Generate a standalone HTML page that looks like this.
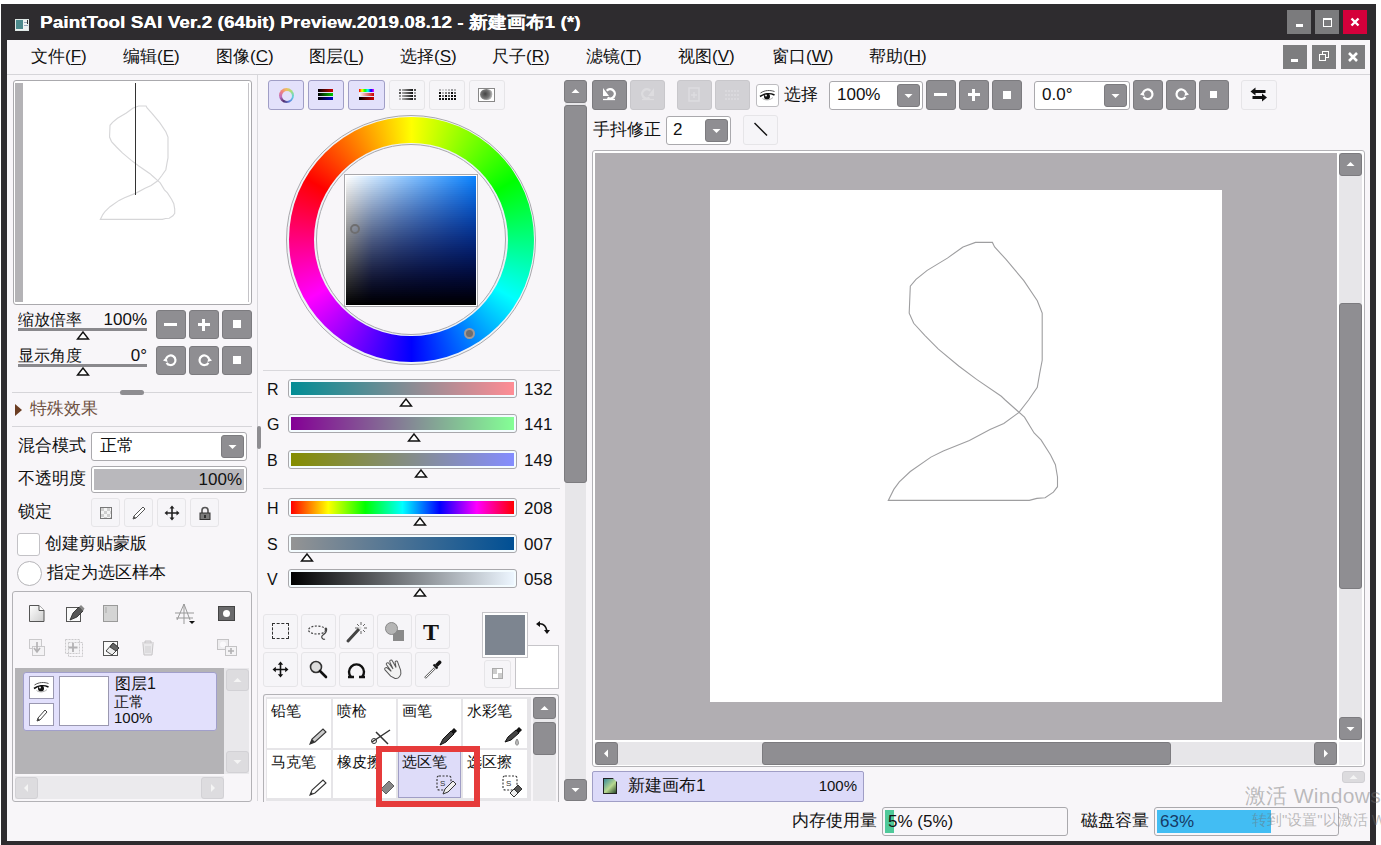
<!DOCTYPE html>
<html><head><meta charset="utf-8">
<style>
*{margin:0;padding:0;box-sizing:border-box}
html,body{width:1381px;height:845px;overflow:hidden;background:#fff;font-family:"Liberation Sans",sans-serif;color:#111}
.a{position:absolute}
.gb{position:absolute;background:#8f8e92;border:1px solid #7c7b7f;border-radius:3px}
.lb{position:absolute;background:#f6f5f8;border:1px solid #e6e5e8;border-radius:3px}
.sel{position:absolute;background:#e3e1fb;border:1px solid #a09ec6;border-radius:3px}
.box{position:absolute;background:#fff;border:1px solid #aaa9ad;border-radius:3px}
.t{position:absolute;white-space:nowrap;line-height:1}
.menu span{position:absolute;top:47px;font-size:17px;line-height:20px;white-space:nowrap}
.menu u{text-decoration:underline;text-underline-offset:2px}
svg{position:absolute;overflow:visible}
</style></head><body>
<!-- window frame -->
<div class="a" style="left:1px;top:4px;width:1375px;height:841px;background:#2e2c2f"></div>
<div class="a" style="left:7px;top:40px;width:1363px;height:801px;background:#f8f6f9"></div>

<!-- title -->
<div class="a" style="left:15px;top:19px;width:14px;height:12px;background:#eef3f2;border:1px solid #dfe8e6"></div>
<div class="a" style="left:16px;top:20px;width:7px;height:9px;background:#4c8a8c"></div>
<div class="a" style="left:24px;top:22px;width:4px;height:1px;background:#9ab"></div><div class="a" style="left:24px;top:25px;width:4px;height:1px;background:#9ab"></div><div class="a" style="left:27px;top:20px;width:1px;height:4px;background:#333"></div>
<div class="t" style="left:40px;top:14px;font-size:17px;font-weight:bold;color:#fff;letter-spacing:.15px;transform:scaleX(1.1);transform-origin:0 0;text-shadow:.3px 0 #fff">PaintTool SAI Ver.2 (64bit) Preview.2019.08.12 - 新建画布1 (*)</div>
<div class="a" style="left:1287px;top:10px;width:24px;height:24px;background:#7b7b7d"></div>
<div class="a" style="left:1296px;top:24px;width:7px;height:2.5px;background:#fff"></div>
<div class="a" style="left:1315px;top:10px;width:24px;height:24px;background:#7b7b7d"></div>
<div class="a" style="left:1323px;top:18px;width:9px;height:9px;border:1.5px solid #fff;border-top-width:2.5px"></div>
<div class="a" style="left:1343px;top:10px;width:24px;height:24px;background:#d5003b"></div>
<svg style="left:1343px;top:10px" width="24" height="24"><path d="M8.5 8.5L15.5 15.5M15.5 8.5L8.5 15.5" stroke="#fff" stroke-width="2.4"/></svg>

<!-- menu -->
<div class="menu">
<span style="left:31px">文件(<u>F</u>)</span>
<span style="left:123px">编辑(<u>E</u>)</span>
<span style="left:216px">图像(<u>C</u>)</span>
<span style="left:309px">图层(<u>L</u>)</span>
<span style="left:400px">选择(<u>S</u>)</span>
<span style="left:492px">尺子(<u>R</u>)</span>
<span style="left:586px">滤镜(<u>T</u>)</span>
<span style="left:678px">视图(<u>V</u>)</span>
<span style="left:772px">窗口(<u>W</u>)</span>
<span style="left:869px">帮助(<u>H</u>)</span>
</div>
<div class="a" style="left:1283px;top:45px;width:24px;height:24px;background:#7d7d7f"></div>
<div class="a" style="left:1291px;top:59px;width:7px;height:3px;background:#fff"></div>
<div class="a" style="left:1312px;top:45px;width:24px;height:24px;background:#7d7d7f"></div>
<div class="a" style="left:1322px;top:51px;width:7px;height:7px;border:1.5px solid #fff"></div>
<div class="a" style="left:1319px;top:54px;width:7px;height:7px;border:1.5px solid #fff;background:#7d7d7f"></div>
<div class="a" style="left:1341px;top:45px;width:24px;height:24px;background:#7d7d7f"></div>
<svg style="left:1341px;top:45px" width="24" height="24"><path d="M8 8L16 16M16 8L8 16" stroke="#fff" stroke-width="2.6"/></svg>
<div class="a" style="left:7px;top:74px;width:1363px;height:1px;background:#d6d5d9"></div>

<!-- panel separators -->
<div class="a" style="left:257px;top:75px;width:1px;height:726px;background:#d9d8dc"></div>


<!-- ===== LEFT PANEL ===== -->
<!-- navigator -->
<div class="a" style="left:13px;top:80px;width:239px;height:225px;background:#fff;border:1px solid #aaa9ad;border-radius:3px"></div>
<div class="a" style="left:15px;top:83px;width:8px;height:219px;background:#b4b3b6"></div>
<div class="a" style="left:248px;top:83px;width:1px;height:219px;background:#c4c3c7"></div>
<svg style="left:22px;top:83px" width="225" height="225" viewBox="0 0 512 512"><path d="M253.0,57.0 L265.5,52.4 L282.4,52.4 L284.6,56.9 L295.8,69.2 L313.8,90.6 L327.3,110.8 L332.2,123.1 L332.2,170.3 L329.6,183.8 L327.3,197.3 L318.6,210.0 L309.0,222.4 L293.8,233.4 L280.0,239.6 L259.4,250.6 L233.3,260.9 L220.9,267.1 L200.3,281.5 L189.3,291.9 L183.8,299.4 L178.3,310.4 L319.3,310.4 L326.9,308.4 L335.1,307.7 L343.4,302.2 L347.5,296.7 L347.5,287.0 L345.4,274.7 L340.6,265.0 L331.0,249.9 L324.1,243.0 L314.5,227.2 L307.6,221.0 L295.2,210.0 L291.3,206.3 L266.6,189.4 L248.7,176.0 L228.4,159.1 L215.0,145.6 L203.7,133.3 L199.2,123.1 L200.3,96.2 L206.0,89.4 L217.2,80.4 L237.4,68.1 L253.0,57.0" fill="none" stroke="#d6d6d8" stroke-width="2.6"/></svg>
<div class="a" style="left:135px;top:83px;width:1px;height:112px;background:#333"></div>

<!-- zoom / angle -->
<div class="t" style="left:18px;top:311px;font-size:16px;line-height:17px">缩放倍率</div>
<div class="t" style="left:100px;top:311px;width:47px;text-align:right;font-size:17px;line-height:17px">100%</div>
<div class="a" style="left:18px;top:328px;width:129px;height:3px;background:#8a898d"></div>
<svg style="left:76px;top:331px" width="14" height="9"><path d="M7 1L12.5 8H1.5Z" fill="#fff" stroke="#111" stroke-width="1.4"/></svg>
<div class="t" style="left:18px;top:347px;font-size:16px;line-height:17px">显示角度</div>
<div class="t" style="left:100px;top:347px;width:47px;text-align:right;font-size:17px;line-height:17px">0°</div>
<div class="a" style="left:18px;top:364px;width:129px;height:3px;background:#8a898d"></div>
<svg style="left:76px;top:367px" width="14" height="9"><path d="M7 1L12.5 8H1.5Z" fill="#fff" stroke="#111" stroke-width="1.4"/></svg>

<div class="gb" style="left:156px;top:310px;width:30px;height:29px"></div>
<div class="a" style="left:164px;top:323px;width:13px;height:3px;background:#fff"></div>
<div class="gb" style="left:189px;top:310px;width:30px;height:29px"></div>
<div class="a" style="left:198px;top:323px;width:12px;height:3px;background:#fff"></div>
<div class="a" style="left:202px;top:319px;width:3px;height:12px;background:#fff"></div>
<div class="gb" style="left:222px;top:310px;width:30px;height:29px"></div>
<div class="a" style="left:233px;top:320px;width:8px;height:8px;background:#fff"></div>

<div class="gb" style="left:156px;top:346px;width:30px;height:29px"></div>
<svg style="left:156px;top:346px" width="30" height="29"><path d="M10.2 12.5A4.8 4.8 0 1 1 10.6 16.8" fill="none" stroke="#fff" stroke-width="2.2"/><path d="M7 14.5L10.5 11L11.5 16Z" fill="#fff"/></svg>
<div class="gb" style="left:189px;top:346px;width:30px;height:29px"></div>
<svg style="left:189px;top:346px" width="30" height="29"><path d="M19.8 12.5A4.8 4.8 0 1 0 19.4 16.8" fill="none" stroke="#fff" stroke-width="2.2"/><path d="M23 14.5L19.5 11L18.5 16Z" fill="#fff"/></svg>
<div class="gb" style="left:222px;top:346px;width:30px;height:29px"></div>
<div class="a" style="left:233px;top:356px;width:8px;height:8px;background:#fff"></div>

<div class="a" style="left:12px;top:392px;width:240px;height:1px;background:#d6d5d9"></div>
<div class="a" style="left:120px;top:390px;width:24px;height:5px;background:#8e8d91;border-radius:3px"></div>

<!-- effects -->
<svg style="left:15px;top:404px" width="8" height="12"><path d="M0 0L7 6L0 12Z" fill="#6b3d22"/></svg>
<div class="t" style="left:30px;top:400px;font-size:17px;line-height:17px;color:#6e5040">特殊效果</div>
<div class="a" style="left:12px;top:426px;width:240px;height:1px;background:#d6d5d9"></div>
<div class="a" style="left:257px;top:426px;width:4px;height:23px;background:#8e8d91;border-radius:2px"></div>

<div class="t" style="left:18px;top:437px;font-size:17px;line-height:17px">混合模式</div>
<div class="box" style="left:91px;top:432px;width:156px;height:29px"></div>
<div class="t" style="left:100px;top:437px;font-size:17px;line-height:17px">正常</div>
<div class="gb" style="left:221px;top:435px;width:23px;height:23px"></div>
<svg style="left:221px;top:435px" width="23" height="23"><path d="M7.5 10H15.5L11.5 14Z" fill="#fff"/></svg>

<div class="t" style="left:18px;top:470px;font-size:17px;line-height:17px">不透明度</div>
<div class="box" style="left:91px;top:466px;width:156px;height:27px"></div>
<div class="a" style="left:94px;top:469px;width:150px;height:21px;background:#b9b8bc"></div>
<div class="t" style="left:150px;top:471px;width:92px;text-align:right;font-size:17px;line-height:17px">100%</div>

<div class="t" style="left:18px;top:503px;font-size:17px;line-height:17px">锁定</div>
<div class="lb" style="left:91px;top:498px;width:29px;height:29px"></div>
<div class="lb" style="left:124px;top:498px;width:29px;height:29px"></div>
<div class="lb" style="left:157px;top:498px;width:29px;height:29px"></div>
<div class="lb" style="left:190px;top:498px;width:29px;height:29px"></div>

<div class="a" style="left:17px;top:533px;width:23px;height:23px;background:#fff;border:1px solid #c3c2c6;border-radius:3px"></div>
<div class="t" style="left:45px;top:535px;font-size:17px;line-height:17px">创建剪贴蒙版</div>
<div class="a" style="left:17px;top:561px;width:25px;height:25px;background:#fff;border:1px solid #b5b4b8;border-radius:50%"></div>
<div class="t" style="left:47px;top:564px;font-size:17px;line-height:17px">指定为选区样本</div>

<!-- layer panel -->
<div class="a" style="left:12px;top:591px;width:240px;height:211px;border:1px solid #b3b2b6;border-radius:3px"></div>
<div class="a" style="left:15px;top:668px;width:209px;height:106px;background:#b4b3b6"></div>
<div class="a" style="left:23px;top:672px;width:194px;height:59px;background:#e2e0fc;border:1px solid #a19fcb;border-radius:3px"></div>
<div class="a" style="left:29px;top:676px;width:25px;height:23px;background:#fff;border:1px solid #9a98b0"></div>
<div class="a" style="left:29px;top:703px;width:25px;height:23px;background:#fff;border:1px solid #9a98b0"></div>
<div class="a" style="left:59px;top:676px;width:50px;height:50px;background:#fff;border:1px solid #9a98b0"></div>
<div class="t" style="left:115px;top:676px;font-size:16px;line-height:16px">图层1</div>
<div class="t" style="left:114px;top:694px;font-size:15px;line-height:16px">正常</div>
<div class="t" style="left:114px;top:710px;font-size:15px;line-height:15px">100%</div>
<div class="a" style="left:224px;top:668px;width:25px;height:106px;background:#e9e8eb"></div>
<div class="a" style="left:226px;top:669px;width:23px;height:22px;background:#dddcdf;border:1px solid #d2d1d5;border-radius:3px"></div>
<div class="a" style="left:226px;top:751px;width:23px;height:22px;background:#dddcdf;border:1px solid #d2d1d5;border-radius:3px"></div>
<div class="a" style="left:15px;top:776px;width:209px;height:23px;background:#ebeaed"></div>
<div class="a" style="left:15px;top:777px;width:23px;height:22px;background:#dddcdf;border:1px solid #d2d1d5;border-radius:3px"></div>
<div class="a" style="left:201px;top:777px;width:23px;height:22px;background:#dddcdf;border:1px solid #d2d1d5;border-radius:3px"></div>



<div class="a" style="left:100px;top:507px;width:12px;height:12px;border:1px solid #777;background:conic-gradient(#f4f4f4 25%,#cfcfcf 25% 50%,#f4f4f4 50% 75%,#cfcfcf 75%);background-size:6px 6px"></div>
<svg style="left:131px;top:505px" width="16" height="16"><path d="M2 14L3 11L12 2L14 4L5 13Z" fill="#fff" stroke="#555" stroke-width="1"/><path d="M2 14L3 11L5 13Z" fill="#555"/></svg>
<svg style="left:164px;top:505px" width="16" height="16"><path d="M8 2V14M2 8H14" stroke="#222" stroke-width="1.6"/><path d="M8 0.5L5.5 3.5H10.5ZM8 15.5L5.5 12.5H10.5ZM0.5 8L3.5 5.5V10.5ZM15.5 8L12.5 5.5V10.5Z" fill="#222"/></svg>
<svg style="left:197px;top:505px" width="16" height="16"><path d="M5 8V5.5A3 3 0 0 1 11 5.5V8" fill="none" stroke="#555" stroke-width="1.6"/><rect x="3" y="8" width="10" height="6.5" fill="#7a7a7a" stroke="#333" stroke-width="1"/><rect x="7.3" y="10" width="1.4" height="3" fill="#111"/></svg>

<svg style="left:28px;top:604px" width="18" height="19"><path d="M1.5 1.5H11L16 6.5V17.5H1.5Z" fill="url(#pg)" stroke="#555" stroke-width="1"/><path d="M11 1.5V6.5H16" fill="#fff" stroke="#555" stroke-width="1"/><defs><linearGradient id="pg" x1="0" y1="0" x2="1" y2="1"><stop offset="0" stop-color="#fff"/><stop offset="1" stop-color="#ccc"/></linearGradient></defs></svg>
<svg style="left:65px;top:604px" width="20" height="19"><rect x="1.5" y="3.5" width="14" height="14" fill="#fafafa" stroke="#555"/><path d="M5 16L8 9L14 3L18 7L12 13Z" fill="#555" stroke="#222" stroke-width=".8"/><path d="M14 3L16 1L19.5 4.5L18 7Z" fill="#888"/></svg>
<svg style="left:102px;top:604px" width="18" height="19"><rect x="1.5" y="1.5" width="14" height="16" fill="#d4d4d4" stroke="#9a9a9a"/><path d="M4 3V9" stroke="#aaa"/></svg>
<svg style="left:174px;top:603px" width="24" height="22"><path d="M10 1L3 17M10 1L16 17M10 1V21M1 10H20M2 15H19" fill="none" stroke="#999" stroke-width="1"/><path d="M15 18H21L18 21Z" fill="#111"/></svg>
<div class="a" style="left:218px;top:606px;width:17px;height:15px;background:#6a6a6c;border:1px solid #444"></div>
<div class="a" style="left:223px;top:610px;width:7px;height:7px;border-radius:50%;background:#fff"></div>

<svg style="left:28px;top:638px" width="18" height="19" opacity=".35"><rect x="1.5" y="1.5" width="12" height="9" fill="#eee" stroke="#777"/><rect x="4.5" y="8.5" width="12" height="9" fill="#eee" stroke="#777"/><path d="M9 4V13M6 10L9 14L12 10" stroke="#333" stroke-width="1.6" fill="none"/></svg>
<svg style="left:64px;top:638px" width="19" height="19" opacity=".35"><rect x="1.5" y="1.5" width="14" height="14" fill="#eee" stroke="#777" stroke-dasharray="2 1"/><rect x="4.5" y="4.5" width="14" height="14" fill="none" stroke="#777" stroke-dasharray="2 1"/><path d="M9 5V14M4.5 9.5H13.5" stroke="#333" stroke-width="1.8"/></svg>
<svg style="left:102px;top:638px" width="19" height="19"><rect x="1.5" y="3.5" width="14" height="14" fill="#fafafa" stroke="#555"/><path d="M4 13L11 5L17 10L10 17Z" fill="#eee" stroke="#333" stroke-width=".9"/><path d="M8 9L11 5L17 10L14 13Z" fill="#666" stroke="#333" stroke-width=".9"/></svg>
<svg style="left:139px;top:638px" width="18" height="19" opacity=".3"><path d="M3 5H15M6 5V3H12V5M4 6L5 17H13L14 6" fill="#ccc" stroke="#555"/><path d="M7 8V15M9 8V15M11 8V15" stroke="#777"/></svg>
<svg style="left:216px;top:638px" width="22" height="19" opacity=".35"><rect x="1.5" y="1.5" width="11" height="10" fill="#ddd" stroke="#666"/><circle cx="7" cy="6.5" r="3" fill="#fff"/><rect x="9.5" y="8.5" width="11" height="9" fill="#eee" stroke="#666"/><path d="M15 10V16M12 13H18" stroke="#333" stroke-width="1.6"/></svg>

<svg style="left:29px;top:676px" width="25" height="23"><path d="M5.5 9C10 6 15 6 19.5 7.5" fill="none" stroke="#555" stroke-width="1"/><path d="M5 12.5C9 9.5 15 9 19.5 11" fill="none" stroke="#111" stroke-width="1.6"/><circle cx="12" cy="12.5" r="3" fill="#111"/><circle cx="11" cy="11.5" r=".9" fill="#fff"/><path d="M7.5 14.5C10 16.5 15 16.5 18 13.5" fill="none" stroke="#999" stroke-width=".8"/></svg>
<svg style="left:29px;top:703px" width="25" height="23"><path d="M8 18L9 15L16 7L18 9L11 17Z" fill="#fff" stroke="#444" stroke-width="1"/><path d="M8 18L9 15L11 17Z" fill="#444"/></svg>
<svg style="left:226px;top:669px" width="23" height="22"><path d="M7.5 13H15.5L11.5 9Z" fill="#f4f4f4"/></svg>
<svg style="left:226px;top:751px" width="23" height="22"><path d="M7.5 9H15.5L11.5 13Z" fill="#f4f4f4"/></svg>
<svg style="left:15px;top:777px" width="23" height="22"><path d="M13 7V15L9 11Z" fill="#f4f4f4"/></svg>
<svg style="left:201px;top:777px" width="23" height="22"><path d="M10 7V15L14 11Z" fill="#f4f4f4"/></svg>
<div class="a" style="left:533px;top:779px;width:23px;height:22px;background:#e9e8eb"></div>

<!-- ===== COLOR PANEL ===== -->
<div class="sel" style="left:268px;top:80px;width:36px;height:30px"></div>
<div class="a" style="left:279px;top:88px;width:15px;height:15px;border-radius:50%;background:conic-gradient(#f0c060,#a0e080,#60d0e0,#6080e0,#503070,#c070c0,#f08080,#f0c060)"></div><div class="a" style="left:281.5px;top:90.5px;width:10px;height:10px;border-radius:50%;background:#e3e1fb"></div>
<div class="sel" style="left:308px;top:80px;width:36px;height:30px"></div>
<div class="a" style="left:318px;top:89px;width:15px;height:3px;background:linear-gradient(90deg,#000,#c00)"></div>
<div class="a" style="left:318px;top:93px;width:15px;height:3px;background:linear-gradient(90deg,#000,#0c0)"></div>
<div class="a" style="left:318px;top:97px;width:15px;height:3px;background:linear-gradient(90deg,#000,#00c)"></div>
<div class="sel" style="left:348px;top:80px;width:37px;height:30px"></div>
<div class="a" style="left:359px;top:89px;width:15px;height:3px;background:linear-gradient(90deg,#f00,#ff0,#0f0,#0ff,#00f,#f0f)"></div>
<div class="a" style="left:359px;top:93px;width:15px;height:3px;background:linear-gradient(90deg,#fff,#c00)"></div>
<div class="a" style="left:359px;top:97px;width:15px;height:3px;background:linear-gradient(90deg,#000,#c00)"></div>
<div class="lb" style="left:389px;top:80px;width:36px;height:30px"></div>
<svg style="left:389px;top:80px" width="36" height="30"><defs><linearGradient id="lg4"><stop offset="0" stop-color="#aaa"/><stop offset="1" stop-color="#111"/></linearGradient></defs><g fill="#555"><rect x="10" y="9" width="2" height="2" opacity=".7"/><rect x="10" y="12" width="2" height="2"/><rect x="10" y="15" width="2" height="2" opacity=".6"/><rect x="10" y="18" width="2" height="2" opacity=".4"/><rect x="25" y="9" width="2" height="2"/><rect x="25" y="12" width="2" height="2" opacity=".5"/><rect x="25" y="15" width="2" height="2"/><rect x="25" y="18" width="2" height="2"/></g><g fill="url(#lg4)"><rect x="13" y="9" width="11" height="2"/><rect x="13" y="12" width="11" height="2"/><rect x="13" y="15" width="11" height="2"/><rect x="13" y="18" width="11" height="2"/></g></svg>
<div class="lb" style="left:429px;top:80px;width:36px;height:30px"></div>
<svg style="left:429px;top:80px" width="36" height="30"><g fill="#111"><rect x="10" y="9" width="2" height="2" opacity="0.3"/><rect x="13" y="9" width="2" height="2" opacity="0.15"/><rect x="16" y="9" width="2" height="2" opacity="0.2"/><rect x="19" y="9" width="2" height="2" opacity="0.25"/><rect x="22" y="9" width="2" height="2" opacity="0.4"/><rect x="25" y="9" width="2" height="2" opacity="0.3"/><rect x="10" y="12" width="2" height="2" opacity="1"/><rect x="13" y="12" width="2" height="2" opacity="0.3"/><rect x="16" y="12" width="2" height="2" opacity="0.5"/><rect x="19" y="12" width="2" height="2" opacity="0.6"/><rect x="22" y="12" width="2" height="2" opacity="1"/><rect x="25" y="12" width="2" height="2" opacity="0.6"/><rect x="10" y="15" width="2" height="2" opacity="1"/><rect x="13" y="15" width="2" height="2" opacity="0.6"/><rect x="16" y="15" width="2" height="2" opacity="1"/><rect x="19" y="15" width="2" height="2" opacity="0.7"/><rect x="22" y="15" width="2" height="2" opacity="1"/><rect x="25" y="15" width="2" height="2" opacity="1"/><rect x="10" y="18" width="2" height="2" opacity="1"/><rect x="13" y="18" width="2" height="2" opacity="1"/><rect x="16" y="18" width="2" height="2" opacity="1"/><rect x="19" y="18" width="2" height="2" opacity="1"/><rect x="22" y="18" width="2" height="2" opacity="1"/><rect x="25" y="18" width="2" height="2" opacity="1"/></g></svg>
<div class="lb" style="left:469px;top:80px;width:36px;height:30px"></div>
<div class="a" style="left:478px;top:88px;width:17px;height:14px;background:#fff;border:1px solid #888"></div>
<div class="a" style="left:480px;top:89px;width:13px;height:11px;border-radius:50%;background:radial-gradient(circle at 40% 45%,#444,#777 45%,#bbb 70%,transparent 76%)"></div>

<!-- wheel -->
<div class="a" style="left:286.2px;top:114.6px;width:250.0px;height:250.0px;border-radius:50%;background:#f0f4f8;border:1px solid #a9a8ac"></div>
<div class="a" style="left:288.7px;top:117.1px;width:245.0px;height:245.0px;border-radius:50%;background:conic-gradient(from 0deg,#ff0,#0f0,#0ff,#00f,#f0f,#f00,#ff0)"></div>
<div class="a" style="left:314.4px;top:142.8px;width:193.6px;height:193.6px;border-radius:50%;background:#eef2f8"></div>
<div class="a" style="left:315.9px;top:144.3px;width:190.6px;height:190.6px;border-radius:50%;background:#f8f6f9;border:1px solid #a9a8ac"></div>
<div class="a" style="left:344px;top:174px;width:134px;height:133px;background:#fff;border:1px solid #a9a8ac"></div>
<svg style="left:346px;top:176px;overflow:hidden" width="130" height="129" shape-rendering="crispEdges"><defs><linearGradient id="q0"><stop offset="0.0" stop-color="#fdfdfd"/><stop offset="0.2" stop-color="#cce4fd"/><stop offset="0.4" stop-color="#9bccfd"/><stop offset="0.6" stop-color="#6bb3fd"/><stop offset="0.8" stop-color="#3a9bfd"/><stop offset="1.0" stop-color="#0a82fd"/></linearGradient><linearGradient id="q1"><stop offset="0.0" stop-color="#f9f9f9"/><stop offset="0.2" stop-color="#c7e0f9"/><stop offset="0.4" stop-color="#97c7f9"/><stop offset="0.6" stop-color="#68aff9"/><stop offset="0.8" stop-color="#3897f9"/><stop offset="1.0" stop-color="#0a7ff9"/></linearGradient><linearGradient id="q2"><stop offset="0.0" stop-color="#f5f5f5"/><stop offset="0.2" stop-color="#c3dbf5"/><stop offset="0.4" stop-color="#93c2f5"/><stop offset="0.6" stop-color="#65aaf5"/><stop offset="0.8" stop-color="#3793f5"/><stop offset="1.0" stop-color="#097bf5"/></linearGradient><linearGradient id="q3"><stop offset="0.0" stop-color="#f1f1f1"/><stop offset="0.2" stop-color="#bfd7f1"/><stop offset="0.4" stop-color="#90bef1"/><stop offset="0.6" stop-color="#62a6f1"/><stop offset="0.8" stop-color="#358ff1"/><stop offset="1.0" stop-color="#0978f1"/></linearGradient><linearGradient id="q4"><stop offset="0.0" stop-color="#ededed"/><stop offset="0.2" stop-color="#bad2ed"/><stop offset="0.4" stop-color="#8cb9ed"/><stop offset="0.6" stop-color="#5fa2ed"/><stop offset="0.8" stop-color="#338bed"/><stop offset="1.0" stop-color="#0975ed"/></linearGradient><linearGradient id="q5"><stop offset="0.0" stop-color="#e9e9e9"/><stop offset="0.2" stop-color="#b6cee9"/><stop offset="0.4" stop-color="#88b5e9"/><stop offset="0.6" stop-color="#5c9de9"/><stop offset="0.8" stop-color="#3287e9"/><stop offset="1.0" stop-color="#0971e9"/></linearGradient><linearGradient id="q6"><stop offset="0.0" stop-color="#e5e5e5"/><stop offset="0.2" stop-color="#b2c9e5"/><stop offset="0.4" stop-color="#84b0e5"/><stop offset="0.6" stop-color="#5999e5"/><stop offset="0.8" stop-color="#3083e5"/><stop offset="1.0" stop-color="#096ee5"/></linearGradient><linearGradient id="q7"><stop offset="0.0" stop-color="#e1e1e1"/><stop offset="0.2" stop-color="#aec5e1"/><stop offset="0.4" stop-color="#81ace1"/><stop offset="0.6" stop-color="#5795e1"/><stop offset="0.8" stop-color="#2f7fe1"/><stop offset="1.0" stop-color="#086be1"/></linearGradient><linearGradient id="q8"><stop offset="0.0" stop-color="#dddddd"/><stop offset="0.2" stop-color="#a9c0dd"/><stop offset="0.4" stop-color="#7da8dd"/><stop offset="0.6" stop-color="#5491dd"/><stop offset="0.8" stop-color="#2d7cdd"/><stop offset="1.0" stop-color="#0868dd"/></linearGradient><linearGradient id="q9"><stop offset="0.0" stop-color="#d9d9d9"/><stop offset="0.2" stop-color="#a5bcd9"/><stop offset="0.4" stop-color="#79a3d9"/><stop offset="0.6" stop-color="#518dd9"/><stop offset="0.8" stop-color="#2b78d9"/><stop offset="1.0" stop-color="#0865d9"/></linearGradient><linearGradient id="q10"><stop offset="0.0" stop-color="#d5d5d5"/><stop offset="0.2" stop-color="#a1b7d5"/><stop offset="0.4" stop-color="#769fd5"/><stop offset="0.6" stop-color="#4e89d5"/><stop offset="0.8" stop-color="#2a74d5"/><stop offset="1.0" stop-color="#0862d5"/></linearGradient><linearGradient id="q11"><stop offset="0.0" stop-color="#d2d2d2"/><stop offset="0.2" stop-color="#9db3d2"/><stop offset="0.4" stop-color="#729ad2"/><stop offset="0.6" stop-color="#4c85d2"/><stop offset="0.8" stop-color="#2971d2"/><stop offset="1.0" stop-color="#075fd2"/></linearGradient><linearGradient id="q12"><stop offset="0.0" stop-color="#cecece"/><stop offset="0.2" stop-color="#98aece"/><stop offset="0.4" stop-color="#6f96ce"/><stop offset="0.6" stop-color="#4981ce"/><stop offset="0.8" stop-color="#276dce"/><stop offset="1.0" stop-color="#075cce"/></linearGradient><linearGradient id="q13"><stop offset="0.0" stop-color="#cacaca"/><stop offset="0.2" stop-color="#94aaca"/><stop offset="0.4" stop-color="#6b92ca"/><stop offset="0.6" stop-color="#477dca"/><stop offset="0.8" stop-color="#266aca"/><stop offset="1.0" stop-color="#0759ca"/></linearGradient><linearGradient id="q14"><stop offset="0.0" stop-color="#c6c6c6"/><stop offset="0.2" stop-color="#90a5c6"/><stop offset="0.4" stop-color="#688dc6"/><stop offset="0.6" stop-color="#4479c6"/><stop offset="0.8" stop-color="#2466c6"/><stop offset="1.0" stop-color="#0756c6"/></linearGradient><linearGradient id="q15"><stop offset="0.0" stop-color="#c2c2c2"/><stop offset="0.2" stop-color="#8ca1c2"/><stop offset="0.4" stop-color="#6489c2"/><stop offset="0.6" stop-color="#4275c2"/><stop offset="0.8" stop-color="#2363c2"/><stop offset="1.0" stop-color="#0753c2"/></linearGradient><linearGradient id="q16"><stop offset="0.0" stop-color="#bebebe"/><stop offset="0.2" stop-color="#889cbe"/><stop offset="0.4" stop-color="#6185be"/><stop offset="0.6" stop-color="#3f71be"/><stop offset="0.8" stop-color="#2260be"/><stop offset="1.0" stop-color="#0650be"/></linearGradient><linearGradient id="q17"><stop offset="0.0" stop-color="#bababa"/><stop offset="0.2" stop-color="#8498ba"/><stop offset="0.4" stop-color="#5e81ba"/><stop offset="0.6" stop-color="#3d6dba"/><stop offset="0.8" stop-color="#205cba"/><stop offset="1.0" stop-color="#064dba"/></linearGradient><linearGradient id="q18"><stop offset="0.0" stop-color="#b6b6b6"/><stop offset="0.2" stop-color="#7f94b6"/><stop offset="0.4" stop-color="#5a7db6"/><stop offset="0.6" stop-color="#3b6ab6"/><stop offset="0.8" stop-color="#1f59b6"/><stop offset="1.0" stop-color="#064ab6"/></linearGradient><linearGradient id="q19"><stop offset="0.0" stop-color="#b2b2b2"/><stop offset="0.2" stop-color="#7b8fb2"/><stop offset="0.4" stop-color="#5779b2"/><stop offset="0.6" stop-color="#3866b2"/><stop offset="0.8" stop-color="#1e56b2"/><stop offset="1.0" stop-color="#0648b2"/></linearGradient><linearGradient id="q20"><stop offset="0.0" stop-color="#aeaeae"/><stop offset="0.2" stop-color="#778bae"/><stop offset="0.4" stop-color="#5474ae"/><stop offset="0.6" stop-color="#3662ae"/><stop offset="0.8" stop-color="#1c53ae"/><stop offset="1.0" stop-color="#0645ae"/></linearGradient><linearGradient id="q21"><stop offset="0.0" stop-color="#aaaaaa"/><stop offset="0.2" stop-color="#7387aa"/><stop offset="0.4" stop-color="#5170aa"/><stop offset="0.6" stop-color="#345faa"/><stop offset="0.8" stop-color="#1b4faa"/><stop offset="1.0" stop-color="#0542aa"/></linearGradient><linearGradient id="q22"><stop offset="0.0" stop-color="#a6a6a6"/><stop offset="0.2" stop-color="#6f82a6"/><stop offset="0.4" stop-color="#4d6ca6"/><stop offset="0.6" stop-color="#325ba6"/><stop offset="0.8" stop-color="#1a4ca6"/><stop offset="1.0" stop-color="#0540a6"/></linearGradient><linearGradient id="q23"><stop offset="0.0" stop-color="#a2a2a2"/><stop offset="0.2" stop-color="#6c7ea2"/><stop offset="0.4" stop-color="#4a68a2"/><stop offset="0.6" stop-color="#3057a2"/><stop offset="0.8" stop-color="#1949a2"/><stop offset="1.0" stop-color="#053da2"/></linearGradient><linearGradient id="q24"><stop offset="0.0" stop-color="#9e9e9e"/><stop offset="0.2" stop-color="#687a9e"/><stop offset="0.4" stop-color="#47659e"/><stop offset="0.6" stop-color="#2e549e"/><stop offset="0.8" stop-color="#18469e"/><stop offset="1.0" stop-color="#053b9e"/></linearGradient><linearGradient id="q25"><stop offset="0.0" stop-color="#9a9a9a"/><stop offset="0.2" stop-color="#64759a"/><stop offset="0.4" stop-color="#44619a"/><stop offset="0.6" stop-color="#2c519a"/><stop offset="0.8" stop-color="#17439a"/><stop offset="1.0" stop-color="#05389a"/></linearGradient><linearGradient id="q26"><stop offset="0.0" stop-color="#969696"/><stop offset="0.2" stop-color="#607196"/><stop offset="0.4" stop-color="#415d96"/><stop offset="0.6" stop-color="#2a4d96"/><stop offset="0.8" stop-color="#164096"/><stop offset="1.0" stop-color="#053696"/></linearGradient><linearGradient id="q27"><stop offset="0.0" stop-color="#929292"/><stop offset="0.2" stop-color="#5c6d92"/><stop offset="0.4" stop-color="#3f5992"/><stop offset="0.6" stop-color="#284a92"/><stop offset="0.8" stop-color="#153e92"/><stop offset="1.0" stop-color="#043392"/></linearGradient><linearGradient id="q28"><stop offset="0.0" stop-color="#8e8e8e"/><stop offset="0.2" stop-color="#58698e"/><stop offset="0.4" stop-color="#3c558e"/><stop offset="0.6" stop-color="#26478e"/><stop offset="0.8" stop-color="#143b8e"/><stop offset="1.0" stop-color="#04318e"/></linearGradient><linearGradient id="q29"><stop offset="0.0" stop-color="#8a8a8a"/><stop offset="0.2" stop-color="#55658a"/><stop offset="0.4" stop-color="#39528a"/><stop offset="0.6" stop-color="#24438a"/><stop offset="0.8" stop-color="#13388a"/><stop offset="1.0" stop-color="#042f8a"/></linearGradient><linearGradient id="q30"><stop offset="0.0" stop-color="#868686"/><stop offset="0.2" stop-color="#516086"/><stop offset="0.4" stop-color="#364e86"/><stop offset="0.6" stop-color="#224086"/><stop offset="0.8" stop-color="#123586"/><stop offset="1.0" stop-color="#042c86"/></linearGradient><linearGradient id="q31"><stop offset="0.0" stop-color="#828282"/><stop offset="0.2" stop-color="#4d5c82"/><stop offset="0.4" stop-color="#344a82"/><stop offset="0.6" stop-color="#203d82"/><stop offset="0.8" stop-color="#113382"/><stop offset="1.0" stop-color="#042a82"/></linearGradient><linearGradient id="q32"><stop offset="0.0" stop-color="#7f7f7f"/><stop offset="0.2" stop-color="#4a587f"/><stop offset="0.4" stop-color="#31477f"/><stop offset="0.6" stop-color="#1e3a7f"/><stop offset="0.8" stop-color="#10307f"/><stop offset="1.0" stop-color="#03287f"/></linearGradient><linearGradient id="q33"><stop offset="0.0" stop-color="#7b7b7b"/><stop offset="0.2" stop-color="#46547b"/><stop offset="0.4" stop-color="#2e437b"/><stop offset="0.6" stop-color="#1d377b"/><stop offset="0.8" stop-color="#0f2e7b"/><stop offset="1.0" stop-color="#03267b"/></linearGradient><linearGradient id="q34"><stop offset="0.0" stop-color="#777777"/><stop offset="0.2" stop-color="#435077"/><stop offset="0.4" stop-color="#2c4077"/><stop offset="0.6" stop-color="#1b3477"/><stop offset="0.8" stop-color="#0e2b77"/><stop offset="1.0" stop-color="#032477"/></linearGradient><linearGradient id="q35"><stop offset="0.0" stop-color="#737373"/><stop offset="0.2" stop-color="#404c73"/><stop offset="0.4" stop-color="#293c73"/><stop offset="0.6" stop-color="#1a3173"/><stop offset="0.8" stop-color="#0d2973"/><stop offset="1.0" stop-color="#032273"/></linearGradient><linearGradient id="q36"><stop offset="0.0" stop-color="#6f6f6f"/><stop offset="0.2" stop-color="#3c496f"/><stop offset="0.4" stop-color="#27396f"/><stop offset="0.6" stop-color="#182f6f"/><stop offset="0.8" stop-color="#0c266f"/><stop offset="1.0" stop-color="#03206f"/></linearGradient><linearGradient id="q37"><stop offset="0.0" stop-color="#6b6b6b"/><stop offset="0.2" stop-color="#39456b"/><stop offset="0.4" stop-color="#25366b"/><stop offset="0.6" stop-color="#162c6b"/><stop offset="0.8" stop-color="#0c246b"/><stop offset="1.0" stop-color="#031e6b"/></linearGradient><linearGradient id="q38"><stop offset="0.0" stop-color="#676767"/><stop offset="0.2" stop-color="#364167"/><stop offset="0.4" stop-color="#223367"/><stop offset="0.6" stop-color="#152967"/><stop offset="0.8" stop-color="#0b2267"/><stop offset="1.0" stop-color="#031c67"/></linearGradient><linearGradient id="q39"><stop offset="0.0" stop-color="#636363"/><stop offset="0.2" stop-color="#323d63"/><stop offset="0.4" stop-color="#203063"/><stop offset="0.6" stop-color="#142763"/><stop offset="0.8" stop-color="#0a2063"/><stop offset="1.0" stop-color="#021a63"/></linearGradient><linearGradient id="q40"><stop offset="0.0" stop-color="#5f5f5f"/><stop offset="0.2" stop-color="#2f3a5f"/><stop offset="0.4" stop-color="#1e2d5f"/><stop offset="0.6" stop-color="#12245f"/><stop offset="0.8" stop-color="#091e5f"/><stop offset="1.0" stop-color="#02195f"/></linearGradient><linearGradient id="q41"><stop offset="0.0" stop-color="#5b5b5b"/><stop offset="0.2" stop-color="#2c365b"/><stop offset="0.4" stop-color="#1c2a5b"/><stop offset="0.6" stop-color="#11225b"/><stop offset="0.8" stop-color="#091c5b"/><stop offset="1.0" stop-color="#02175b"/></linearGradient><linearGradient id="q42"><stop offset="0.0" stop-color="#575757"/><stop offset="0.2" stop-color="#293357"/><stop offset="0.4" stop-color="#1a2757"/><stop offset="0.6" stop-color="#101f57"/><stop offset="0.8" stop-color="#081a57"/><stop offset="1.0" stop-color="#021557"/></linearGradient><linearGradient id="q43"><stop offset="0.0" stop-color="#535353"/><stop offset="0.2" stop-color="#262f53"/><stop offset="0.4" stop-color="#182453"/><stop offset="0.6" stop-color="#0e1d53"/><stop offset="0.8" stop-color="#071853"/><stop offset="1.0" stop-color="#021453"/></linearGradient><linearGradient id="q44"><stop offset="0.0" stop-color="#4f4f4f"/><stop offset="0.2" stop-color="#242c4f"/><stop offset="0.4" stop-color="#16214f"/><stop offset="0.6" stop-color="#0d1b4f"/><stop offset="0.8" stop-color="#07164f"/><stop offset="1.0" stop-color="#02124f"/></linearGradient><linearGradient id="q45"><stop offset="0.0" stop-color="#4b4b4b"/><stop offset="0.2" stop-color="#21284b"/><stop offset="0.4" stop-color="#141f4b"/><stop offset="0.6" stop-color="#0c184b"/><stop offset="0.8" stop-color="#06144b"/><stop offset="1.0" stop-color="#02114b"/></linearGradient><linearGradient id="q46"><stop offset="0.0" stop-color="#474747"/><stop offset="0.2" stop-color="#1e2547"/><stop offset="0.4" stop-color="#121c47"/><stop offset="0.6" stop-color="#0b1647"/><stop offset="0.8" stop-color="#061247"/><stop offset="1.0" stop-color="#010f47"/></linearGradient><linearGradient id="q47"><stop offset="0.0" stop-color="#434343"/><stop offset="0.2" stop-color="#1c2243"/><stop offset="0.4" stop-color="#111a43"/><stop offset="0.6" stop-color="#0a1443"/><stop offset="0.8" stop-color="#051043"/><stop offset="1.0" stop-color="#010e43"/></linearGradient><linearGradient id="q48"><stop offset="0.0" stop-color="#3f3f3f"/><stop offset="0.2" stop-color="#191f3f"/><stop offset="0.4" stop-color="#0f173f"/><stop offset="0.6" stop-color="#09123f"/><stop offset="0.8" stop-color="#050f3f"/><stop offset="1.0" stop-color="#010c3f"/></linearGradient><linearGradient id="q49"><stop offset="0.0" stop-color="#3b3b3b"/><stop offset="0.2" stop-color="#171c3b"/><stop offset="0.4" stop-color="#0e153b"/><stop offset="0.6" stop-color="#08103b"/><stop offset="0.8" stop-color="#040d3b"/><stop offset="1.0" stop-color="#010b3b"/></linearGradient><linearGradient id="q50"><stop offset="0.0" stop-color="#373737"/><stop offset="0.2" stop-color="#151937"/><stop offset="0.4" stop-color="#0c1337"/><stop offset="0.6" stop-color="#070f37"/><stop offset="0.8" stop-color="#040c37"/><stop offset="1.0" stop-color="#010a37"/></linearGradient><linearGradient id="q51"><stop offset="0.0" stop-color="#333333"/><stop offset="0.2" stop-color="#121733"/><stop offset="0.4" stop-color="#0b1033"/><stop offset="0.6" stop-color="#060d33"/><stop offset="0.8" stop-color="#030a33"/><stop offset="1.0" stop-color="#010933"/></linearGradient><linearGradient id="q52"><stop offset="0.0" stop-color="#2f2f2f"/><stop offset="0.2" stop-color="#10142f"/><stop offset="0.4" stop-color="#090e2f"/><stop offset="0.6" stop-color="#060b2f"/><stop offset="0.8" stop-color="#03092f"/><stop offset="1.0" stop-color="#01082f"/></linearGradient><linearGradient id="q53"><stop offset="0.0" stop-color="#2b2b2b"/><stop offset="0.2" stop-color="#0e112b"/><stop offset="0.4" stop-color="#080d2b"/><stop offset="0.6" stop-color="#050a2b"/><stop offset="0.8" stop-color="#02082b"/><stop offset="1.0" stop-color="#01072b"/></linearGradient><linearGradient id="q54"><stop offset="0.0" stop-color="#282828"/><stop offset="0.2" stop-color="#0c0f28"/><stop offset="0.4" stop-color="#070b28"/><stop offset="0.6" stop-color="#040828"/><stop offset="0.8" stop-color="#020728"/><stop offset="1.0" stop-color="#010628"/></linearGradient><linearGradient id="q55"><stop offset="0.0" stop-color="#242424"/><stop offset="0.2" stop-color="#0a0d24"/><stop offset="0.4" stop-color="#060924"/><stop offset="0.6" stop-color="#030724"/><stop offset="0.8" stop-color="#020624"/><stop offset="1.0" stop-color="#010524"/></linearGradient><linearGradient id="q56"><stop offset="0.0" stop-color="#202020"/><stop offset="0.2" stop-color="#090b20"/><stop offset="0.4" stop-color="#050820"/><stop offset="0.6" stop-color="#030620"/><stop offset="0.8" stop-color="#010520"/><stop offset="1.0" stop-color="#000420"/></linearGradient><linearGradient id="q57"><stop offset="0.0" stop-color="#1c1c1c"/><stop offset="0.2" stop-color="#07091c"/><stop offset="0.4" stop-color="#04061c"/><stop offset="0.6" stop-color="#02051c"/><stop offset="0.8" stop-color="#01041c"/><stop offset="1.0" stop-color="#00031c"/></linearGradient><linearGradient id="q58"><stop offset="0.0" stop-color="#181818"/><stop offset="0.2" stop-color="#060718"/><stop offset="0.4" stop-color="#030518"/><stop offset="0.6" stop-color="#020418"/><stop offset="0.8" stop-color="#010318"/><stop offset="1.0" stop-color="#000218"/></linearGradient><linearGradient id="q59"><stop offset="0.0" stop-color="#141414"/><stop offset="0.2" stop-color="#040514"/><stop offset="0.4" stop-color="#020414"/><stop offset="0.6" stop-color="#010314"/><stop offset="0.8" stop-color="#010214"/><stop offset="1.0" stop-color="#000214"/></linearGradient><linearGradient id="q60"><stop offset="0.0" stop-color="#101010"/><stop offset="0.2" stop-color="#030410"/><stop offset="0.4" stop-color="#020210"/><stop offset="0.6" stop-color="#010210"/><stop offset="0.8" stop-color="#000110"/><stop offset="1.0" stop-color="#000110"/></linearGradient><linearGradient id="q61"><stop offset="0.0" stop-color="#0c0c0c"/><stop offset="0.2" stop-color="#02020c"/><stop offset="0.4" stop-color="#01020c"/><stop offset="0.6" stop-color="#01010c"/><stop offset="0.8" stop-color="#00010c"/><stop offset="1.0" stop-color="#00010c"/></linearGradient><linearGradient id="q62"><stop offset="0.0" stop-color="#080808"/><stop offset="0.2" stop-color="#010108"/><stop offset="0.4" stop-color="#010108"/><stop offset="0.6" stop-color="#000108"/><stop offset="0.8" stop-color="#000008"/><stop offset="1.0" stop-color="#000008"/></linearGradient><linearGradient id="q63"><stop offset="0.0" stop-color="#040404"/><stop offset="0.2" stop-color="#000004"/><stop offset="0.4" stop-color="#000004"/><stop offset="0.6" stop-color="#000004"/><stop offset="0.8" stop-color="#000004"/><stop offset="1.0" stop-color="#000004"/></linearGradient><linearGradient id="q64"><stop offset="0.0" stop-color="#000000"/><stop offset="0.2" stop-color="#000000"/><stop offset="0.4" stop-color="#000000"/><stop offset="0.6" stop-color="#000000"/><stop offset="0.8" stop-color="#000000"/><stop offset="1.0" stop-color="#000000"/></linearGradient></defs><rect y="0" width="130" height="2" fill="url(#q0)"/><rect y="2" width="130" height="2" fill="url(#q1)"/><rect y="4" width="130" height="2" fill="url(#q2)"/><rect y="6" width="130" height="2" fill="url(#q3)"/><rect y="8" width="130" height="2" fill="url(#q4)"/><rect y="10" width="130" height="2" fill="url(#q5)"/><rect y="12" width="130" height="2" fill="url(#q6)"/><rect y="14" width="130" height="2" fill="url(#q7)"/><rect y="16" width="130" height="2" fill="url(#q8)"/><rect y="18" width="130" height="2" fill="url(#q9)"/><rect y="20" width="130" height="2" fill="url(#q10)"/><rect y="22" width="130" height="2" fill="url(#q11)"/><rect y="24" width="130" height="2" fill="url(#q12)"/><rect y="26" width="130" height="2" fill="url(#q13)"/><rect y="28" width="130" height="2" fill="url(#q14)"/><rect y="30" width="130" height="2" fill="url(#q15)"/><rect y="32" width="130" height="2" fill="url(#q16)"/><rect y="34" width="130" height="2" fill="url(#q17)"/><rect y="36" width="130" height="2" fill="url(#q18)"/><rect y="38" width="130" height="2" fill="url(#q19)"/><rect y="40" width="130" height="2" fill="url(#q20)"/><rect y="42" width="130" height="2" fill="url(#q21)"/><rect y="44" width="130" height="2" fill="url(#q22)"/><rect y="46" width="130" height="2" fill="url(#q23)"/><rect y="48" width="130" height="2" fill="url(#q24)"/><rect y="50" width="130" height="2" fill="url(#q25)"/><rect y="52" width="130" height="2" fill="url(#q26)"/><rect y="54" width="130" height="2" fill="url(#q27)"/><rect y="56" width="130" height="2" fill="url(#q28)"/><rect y="58" width="130" height="2" fill="url(#q29)"/><rect y="60" width="130" height="2" fill="url(#q30)"/><rect y="62" width="130" height="2" fill="url(#q31)"/><rect y="64" width="130" height="2" fill="url(#q32)"/><rect y="66" width="130" height="2" fill="url(#q33)"/><rect y="68" width="130" height="2" fill="url(#q34)"/><rect y="70" width="130" height="2" fill="url(#q35)"/><rect y="72" width="130" height="2" fill="url(#q36)"/><rect y="74" width="130" height="2" fill="url(#q37)"/><rect y="76" width="130" height="2" fill="url(#q38)"/><rect y="78" width="130" height="2" fill="url(#q39)"/><rect y="80" width="130" height="2" fill="url(#q40)"/><rect y="82" width="130" height="2" fill="url(#q41)"/><rect y="84" width="130" height="2" fill="url(#q42)"/><rect y="86" width="130" height="2" fill="url(#q43)"/><rect y="88" width="130" height="2" fill="url(#q44)"/><rect y="90" width="130" height="2" fill="url(#q45)"/><rect y="92" width="130" height="2" fill="url(#q46)"/><rect y="94" width="130" height="2" fill="url(#q47)"/><rect y="96" width="130" height="2" fill="url(#q48)"/><rect y="98" width="130" height="2" fill="url(#q49)"/><rect y="100" width="130" height="2" fill="url(#q50)"/><rect y="102" width="130" height="2" fill="url(#q51)"/><rect y="104" width="130" height="2" fill="url(#q52)"/><rect y="106" width="130" height="2" fill="url(#q53)"/><rect y="108" width="130" height="2" fill="url(#q54)"/><rect y="110" width="130" height="2" fill="url(#q55)"/><rect y="112" width="130" height="2" fill="url(#q56)"/><rect y="114" width="130" height="2" fill="url(#q57)"/><rect y="116" width="130" height="2" fill="url(#q58)"/><rect y="118" width="130" height="2" fill="url(#q59)"/><rect y="120" width="130" height="2" fill="url(#q60)"/><rect y="122" width="130" height="2" fill="url(#q61)"/><rect y="124" width="130" height="2" fill="url(#q62)"/><rect y="126" width="130" height="2" fill="url(#q63)"/><rect y="128" width="130" height="2" fill="url(#q64)"/></svg>
<div class="a" style="left:350px;top:224px;width:10px;height:10px;border-radius:50%;border:2px solid #6e6e70"></div>
<div class="a" style="left:464px;top:328px;width:11px;height:11px;border-radius:50%;border:2px solid #a09a9a;background:#6e6e70"></div>

<!-- sliders -->
<div class="a" style="left:263px;top:488px;width:297px;height:1px;background:#d9d8dc"></div>
<div class="a" style="left:263px;top:370px;width:297px;height:1px;background:#d9d8dc"></div>
<div class="t" style="left:267px;top:382px;font-size:16px;line-height:16px">R</div>
<div class="a" style="left:288px;top:379px;width:229px;height:19px;background:#f4fcff;border:1px solid #a9a8ac;border-radius:3px"></div>
<div class="a" style="left:291px;top:382px;width:223px;height:13px;background:linear-gradient(90deg,#008d95,#ff8d95)"></div>
<div class="t" style="left:524px;top:381px;font-size:17px;line-height:17px">132</div>
<svg style="left:399px;top:398px" width="14" height="9"><path d="M7 1L12.5 8H1.5Z" fill="#fff" stroke="#111" stroke-width="1.4"/></svg>
<div class="t" style="left:267px;top:417px;font-size:16px;line-height:16px">G</div>
<div class="a" style="left:288px;top:414px;width:229px;height:19px;background:#f4fcff;border:1px solid #a9a8ac;border-radius:3px"></div>
<div class="a" style="left:291px;top:417px;width:223px;height:13px;background:linear-gradient(90deg,#840095,#84ff95)"></div>
<div class="t" style="left:524px;top:416px;font-size:17px;line-height:17px">141</div>
<svg style="left:407px;top:433px" width="14" height="9"><path d="M7 1L12.5 8H1.5Z" fill="#fff" stroke="#111" stroke-width="1.4"/></svg>
<div class="t" style="left:267px;top:453px;font-size:16px;line-height:16px">B</div>
<div class="a" style="left:288px;top:450px;width:229px;height:19px;background:#f4fcff;border:1px solid #a9a8ac;border-radius:3px"></div>
<div class="a" style="left:291px;top:453px;width:223px;height:13px;background:linear-gradient(90deg,#848d00,#848dff)"></div>
<div class="t" style="left:524px;top:452px;font-size:17px;line-height:17px">149</div>
<svg style="left:414px;top:469px" width="14" height="9"><path d="M7 1L12.5 8H1.5Z" fill="#fff" stroke="#111" stroke-width="1.4"/></svg>
<div class="t" style="left:267px;top:501px;font-size:16px;line-height:16px">H</div>
<div class="a" style="left:288px;top:498px;width:229px;height:19px;background:#f4fcff;border:1px solid #a9a8ac;border-radius:3px"></div>
<div class="a" style="left:291px;top:501px;width:223px;height:13px;background:linear-gradient(90deg,#f00,#ff0 16.7%,#0f0 33.3%,#0ff 50%,#00f 66.7%,#f0f 83.3%,#f00)"></div>
<div class="t" style="left:524px;top:500px;font-size:17px;line-height:17px">208</div>
<svg style="left:413px;top:517px" width="14" height="9"><path d="M7 1L12.5 8H1.5Z" fill="#fff" stroke="#111" stroke-width="1.4"/></svg>
<div class="t" style="left:267px;top:537px;font-size:16px;line-height:16px">S</div>
<div class="a" style="left:288px;top:534px;width:229px;height:19px;background:#f4fcff;border:1px solid #a9a8ac;border-radius:3px"></div>
<div class="a" style="left:291px;top:537px;width:223px;height:13px;background:linear-gradient(90deg,#949494,#004f94)"></div>
<div class="t" style="left:524px;top:536px;font-size:17px;line-height:17px">007</div>
<svg style="left:300px;top:553px" width="14" height="9"><path d="M7 1L12.5 8H1.5Z" fill="#fff" stroke="#111" stroke-width="1.4"/></svg>
<div class="t" style="left:267px;top:572px;font-size:16px;line-height:16px">V</div>
<div class="a" style="left:288px;top:569px;width:229px;height:19px;background:#f4fcff;border:1px solid #a9a8ac;border-radius:3px"></div>
<div class="a" style="left:291px;top:572px;width:223px;height:13px;background:linear-gradient(90deg,#000,#edf6ff)"></div>
<div class="t" style="left:524px;top:571px;font-size:17px;line-height:17px">058</div>
<svg style="left:413px;top:588px" width="14" height="9"><path d="M7 1L12.5 8H1.5Z" fill="#fff" stroke="#111" stroke-width="1.4"/></svg>

<!-- color panel scrollbar -->
<div class="a" style="left:565px;top:103px;width:21px;height:695px;background:#e7e6e9"></div>
<div class="gb" style="left:564px;top:80px;width:23px;height:23px"></div>
<svg style="left:564px;top:80px" width="23" height="23"><path d="M7.5 13H15.5L11.5 9Z" fill="#fff"/></svg>
<div class="gb" style="left:564px;top:105px;width:23px;height:378px"></div>
<div class="gb" style="left:564px;top:779px;width:23px;height:22px"></div>
<svg style="left:564px;top:779px" width="23" height="22"><path d="M7.5 9H15.5L11.5 13Z" fill="#fff"/></svg>


<!-- ===== TOOLS ===== -->
<div class="lb" style="left:263px;top:614px;width:35px;height:35px"></div>
<div class="lb" style="left:301px;top:614px;width:35px;height:35px"></div>
<div class="lb" style="left:339px;top:614px;width:35px;height:35px"></div>
<div class="lb" style="left:377px;top:614px;width:35px;height:35px"></div>
<div class="lb" style="left:415px;top:614px;width:35px;height:35px"></div>
<div class="lb" style="left:263px;top:652px;width:35px;height:35px"></div>
<div class="lb" style="left:301px;top:652px;width:35px;height:35px"></div>
<div class="lb" style="left:339px;top:652px;width:35px;height:35px"></div>
<div class="lb" style="left:377px;top:652px;width:35px;height:35px"></div>
<div class="lb" style="left:415px;top:652px;width:35px;height:35px"></div>

<div class="a" style="left:272px;top:623px;width:17px;height:16px;border:1.3px dashed #333"></div>
<svg style="left:301px;top:614px" width="35" height="35"><ellipse cx="16" cy="16" rx="8.5" ry="4" fill="none" stroke="#444" stroke-width="1.2" stroke-dasharray="2 1.5"/><path d="M24 15C26 12 27 18 22 21C19 23 22 26 24 25" fill="none" stroke="#444" stroke-width="1.2"/></svg>
<svg style="left:339px;top:614px" width="35" height="35"><path d="M9 27L20 15" stroke="#444" stroke-width="3" stroke-linecap="round"/><path d="M20 15L22 13" stroke="#ddd" stroke-width="3"/><path d="M22 8V11M22 17V20M16 14H19M25 14H28M18 10L20 12M26 10L24 12M26 18L24 16" stroke="#666" stroke-width="1"/></svg>
<svg style="left:377px;top:614px" width="35" height="35"><rect x="16" y="16" width="11" height="11" fill="#8a8a8a"/><circle cx="14.5" cy="14.5" r="6" fill="#b5b5b5" stroke="#888" stroke-width="1"/></svg>
<div class="t" style="left:423px;top:620px;font-family:'Liberation Serif',serif;font-weight:bold;font-size:24px;line-height:24px">T</div>
<svg style="left:263px;top:652px" width="35" height="35"><path d="M17.5 11V24M11 17.5H24" stroke="#111" stroke-width="1.6"/><path d="M17.5 9.5L14.8 12.8H20.2ZM17.5 25.5L14.8 22.2H20.2ZM9.5 17.5L12.8 14.8V20.2ZM25.5 17.5L22.2 14.8V20.2Z" fill="#111"/></svg>
<svg style="left:301px;top:652px" width="35" height="35"><circle cx="15" cy="15" r="5.5" fill="#ddd" stroke="#333" stroke-width="1.6"/><path d="M19 19L25 25" stroke="#111" stroke-width="2.6" stroke-linecap="round"/></svg>
<svg style="left:339px;top:652px" width="35" height="35"><path d="M12 25A7.5 7.5 0 1 1 23 25" fill="none" stroke="#111" stroke-width="2.4"/><path d="M9 25H15M20 25H26" stroke="#111" stroke-width="2.4"/></svg>
<svg style="left:377px;top:652px" width="35" height="35"><g transform="rotate(-25 17 17)"><path d="M11 22L8.5 14C8 12 11 11.5 11.5 13.5L13.5 18L12 10C11.8 8 14.5 8 14.8 10L16.2 16.5L16.2 9C16.2 7 19 7 19 9L19.5 16.5L20.8 11.5C21.3 10 23.5 10.5 23.3 12L22.5 21C21.5 26 17 28 14 26Z" fill="#f2f2f2" stroke="#555" stroke-width="1"/></g></svg>
<svg style="left:415px;top:652px" width="35" height="35"><path d="M10 26L20 16" stroke="#666" stroke-width="2.4"/><path d="M10.5 25.5L19.5 16.5" stroke="#fff" stroke-width="1"/><path d="M20 12.5L23.5 9C25 7.5 27.5 10 26 11.5L22.5 15Z" fill="#111"/><path d="M18.5 12.5L22.5 16.5" stroke="#111" stroke-width="2"/></svg>

<!-- fg/bg color -->
<div class="a" style="left:515px;top:645px;width:44px;height:44px;background:#fff;border:1px solid #c6c5c9"></div>
<div class="a" style="left:483px;top:613px;width:44px;height:44px;background:#7d8590;border:2px solid #fff;outline:1px solid #c6c5c9"></div>
<svg style="left:535px;top:619px" width="18" height="18"><path d="M3 5C8 4 11 7 12 12" fill="none" stroke="#111" stroke-width="1.6"/><path d="M1 5L5 2V8Z M12 15L9 11H15Z" fill="#111"/></svg>
<div class="lb" style="left:484px;top:660px;width:27px;height:28px"></div>
<div class="a" style="left:492px;top:668px;width:11px;height:11px;border:1px solid #aaa;background:conic-gradient(#fff 25%,#ccc 25% 50%,#fff 50% 75%,#ccc 75%)"></div>

<!-- brush grid -->
<div class="a" style="left:263px;top:694px;width:296px;height:108px;border:1px solid #b3b2b6;border-bottom:none;border-radius:3px 3px 0 0"></div>
<div class="a" style="left:266px;top:697px;width:265px;height:104px;background:#e6e5e8"></div>
<div class="a" style="left:533px;top:697px;width:23px;height:104px;background:#e9e8eb"></div>
<div class="a" style="left:267px;top:699px;width:64px;height:49px;background:#fff;"></div>
<div class="t" style="left:271px;top:703px;font-size:15px;line-height:16px">铅笔</div>
<div class="a" style="left:333px;top:699px;width:63px;height:49px;background:#fff;"></div>
<div class="t" style="left:337px;top:703px;font-size:15px;line-height:16px">喷枪</div>
<div class="a" style="left:398px;top:699px;width:63px;height:49px;background:#fff;"></div>
<div class="t" style="left:402px;top:703px;font-size:15px;line-height:16px">画笔</div>
<div class="a" style="left:463px;top:699px;width:64px;height:49px;background:#fff;"></div>
<div class="t" style="left:467px;top:703px;font-size:15px;line-height:16px">水彩笔</div>
<div class="a" style="left:267px;top:750px;width:64px;height:48px;background:#fff;"></div>
<div class="t" style="left:271px;top:754px;font-size:15px;line-height:16px">马克笔</div>
<div class="a" style="left:333px;top:750px;width:63px;height:48px;background:#fff;"></div>
<div class="t" style="left:337px;top:754px;font-size:15px;line-height:16px">橡皮擦</div>
<div class="a" style="left:398px;top:750px;width:63px;height:48px;background:#dedcf9;border:1px solid #a09ec6;"></div>
<div class="t" style="left:402px;top:754px;font-size:15px;line-height:16px">选区笔</div>
<div class="a" style="left:463px;top:750px;width:64px;height:48px;background:#fff;"></div>
<div class="t" style="left:467px;top:754px;font-size:15px;line-height:16px">选区擦</div>

<svg style="left:307px;top:726px" width="22" height="20"><path d="M3 18L5 13L16 3L19 6L8 16Z" fill="#ccc" stroke="#333" stroke-width="1.1"/><path d="M3 18L5 13L8 16Z" fill="#333"/></svg>
<svg style="left:368px;top:726px" width="26" height="20"><path d="M4 16L22 4M8 6L20 18" stroke="#333" stroke-width="1.5"/><circle cx="6" cy="15" r="2.5" fill="none" stroke="#333"/></svg>
<svg style="left:437px;top:726px" width="22" height="22"><path d="M3 19L6 13L14 5L17 8L9 16Z" fill="#444" stroke="#111"/><path d="M14 5L17 2L20 5L17 8Z" fill="#111"/></svg>
<svg style="left:502px;top:726px" width="24" height="22"><path d="M3 16L6 11L14 4L17 7L9 14Z" fill="#444" stroke="#111"/><path d="M14 4L17 1L20 4L17 7Z" fill="#111"/><path d="M15 13C13 16 13 19 15 19C17 19 17 16 15 13Z" fill="#bbb" stroke="#888"/></svg>
<svg style="left:307px;top:777px" width="22" height="20"><path d="M3 18L5 13L16 3L19 6L8 16Z" fill="#fff" stroke="#333" stroke-width="1.1"/><path d="M3 18L4.5 15L6 16.5Z" fill="#333"/></svg>
<svg style="left:435px;top:774px" width="24" height="24"><rect x="2" y="2" width="14" height="14" rx="2" fill="none" stroke="#333" stroke-width="1.1" stroke-dasharray="2 1.5"/><path d="M8 20L10 15L18 7L21 10L13 18Z" fill="#eee" stroke="#333"/><text x="5" y="12" font-size="8" fill="#333" font-family="Liberation Sans">S</text></svg>
<svg style="left:501px;top:774px" width="24" height="24"><rect x="2" y="2" width="14" height="14" rx="2" fill="none" stroke="#333" stroke-width="1.1" stroke-dasharray="2 1.5"/><path d="M9 19L17 11L21 15L13 23Z" fill="#555" stroke="#333"/><path d="M9 19L13 15L17 19L13 23Z" fill="#eee" stroke="#333"/><text x="5" y="12" font-size="8" fill="#333" font-family="Liberation Sans">S</text></svg>
<svg style="left:377px;top:775px" width="18" height="22"><path d="M4 14L12 6L17 11L9 19Z" fill="#888" stroke="#444" stroke-width=".8"/></svg>
<div class="a" style="left:376px;top:746px;width:104px;height:61px;border:6px solid #e63b3b"></div>
<div class="gb" style="left:533px;top:697px;width:23px;height:22px"></div>
<svg style="left:533px;top:697px" width="23" height="22"><path d="M7.5 13H15.5L11.5 9Z" fill="#fff"/></svg>
<div class="gb" style="left:533px;top:722px;width:23px;height:33px"></div>

<!-- ===== CANVAS TOOLBAR ===== -->
<div class="gb" style="left:592px;top:80px;width:35px;height:30px"></div>
<svg style="left:592px;top:80px" width="35" height="30"><path d="M14.8 10.8A4.6 4.6 0 1 1 15.5 17.6" fill="none" stroke="#fff" stroke-width="2.4"/><path d="M11 8V16H17Z" fill="#fff"/><path d="M11 19.5H23" stroke="#fff" stroke-width="1.3"/></svg>
<div class="a" style="left:630px;top:80px;width:35px;height:30px;background:#d2d1d5;border:1px solid #c8c7cb;border-radius:3px"></div>
<div class="a" style="left:677px;top:80px;width:35px;height:30px;background:#d2d1d5;border:1px solid #c8c7cb;border-radius:3px"></div>
<div class="a" style="left:715px;top:80px;width:35px;height:30px;background:#d2d1d5;border:1px solid #c8c7cb;border-radius:3px"></div>

<svg style="left:630px;top:80px" width="35" height="30" opacity=".5"><path d="M20.2 10.8A4.6 4.6 0 1 0 19.5 17.6" fill="none" stroke="#e8e8ea" stroke-width="2.4"/><path d="M24 8V16H18Z" fill="#e8e8ea"/><path d="M12 19.5H24" stroke="#e8e8ea" stroke-width="1.3"/></svg>
<svg style="left:677px;top:80px" width="35" height="30" opacity=".5"><rect x="12" y="8" width="10" height="13" fill="none" stroke="#e8e8ea" stroke-width="1.5"/><path d="M17 12V18M14 15H20" stroke="#e8e8ea" stroke-width="1.5"/></svg>
<svg style="left:715px;top:80px" width="35" height="30" opacity=".5"><path d="M10 11H25M10 15H25M10 19H25" stroke="#e8e8ea" stroke-width="1.5" stroke-dasharray="2 1"/></svg>
<div class="lb" style="left:756px;top:84px;width:23px;height:23px;background:#fff;border-color:#bdbcc0"></div>
<svg style="left:756px;top:84px" width="23" height="23"><path d="M4.5 9C9 6 14 6 18.5 7.5" fill="none" stroke="#555" stroke-width="1"/><path d="M4 12.5C8 9.5 14 9 18.5 11" fill="none" stroke="#111" stroke-width="1.6"/><circle cx="11" cy="12.5" r="3" fill="#111"/><circle cx="10" cy="11.5" r=".9" fill="#fff"/><path d="M6.5 14.5C9 16.5 14 16.5 17 13.5" fill="none" stroke="#999" stroke-width=".8"/></svg>
<div class="t" style="left:784px;top:86px;font-size:17px;line-height:17px">选择</div>
<div class="box" style="left:829px;top:81px;width:94px;height:29px"></div>
<div class="t" style="left:837px;top:86px;font-size:17px;line-height:17px">100%</div>
<div class="gb" style="left:897px;top:84px;width:23px;height:23px"></div>
<svg style="left:897px;top:84px" width="23" height="23"><path d="M7.5 10H15.5L11.5 14Z" fill="#fff"/></svg>
<div class="gb" style="left:926px;top:80px;width:30px;height:30px"></div>
<div class="a" style="left:934px;top:93px;width:13px;height:3px;background:#fff"></div>
<div class="gb" style="left:959px;top:80px;width:30px;height:30px"></div>
<div class="a" style="left:968px;top:93px;width:12px;height:3px;background:#fff"></div>
<div class="a" style="left:972px;top:89px;width:3px;height:12px;background:#fff"></div>
<div class="gb" style="left:992px;top:80px;width:30px;height:30px"></div>
<div class="a" style="left:1003px;top:91px;width:8px;height:8px;background:#fff"></div>
<div class="box" style="left:1034px;top:81px;width:96px;height:29px"></div>
<div class="t" style="left:1042px;top:86px;font-size:17px;line-height:17px">0.0°</div>
<div class="gb" style="left:1104px;top:84px;width:23px;height:23px"></div>
<svg style="left:1104px;top:84px" width="23" height="23"><path d="M7.5 10H15.5L11.5 14Z" fill="#fff"/></svg>
<div class="gb" style="left:1133px;top:80px;width:30px;height:30px"></div>
<svg style="left:1133px;top:80px" width="30" height="30"><path d="M10.2 12.5A4.8 4.8 0 1 1 10.6 16.8" fill="none" stroke="#fff" stroke-width="2.2"/><path d="M7 14.5L10.5 11L11.5 16Z" fill="#fff"/></svg>
<div class="gb" style="left:1166px;top:80px;width:30px;height:30px"></div>
<svg style="left:1166px;top:80px" width="30" height="30"><path d="M19.8 12.5A4.8 4.8 0 1 0 19.4 16.8" fill="none" stroke="#fff" stroke-width="2.2"/><path d="M23 14.5L19.5 11L18.5 16Z" fill="#fff"/></svg>
<div class="gb" style="left:1199px;top:80px;width:30px;height:30px"></div>
<div class="a" style="left:1210px;top:91px;width:7px;height:7px;background:#fff"></div>
<div class="lb" style="left:1241px;top:80px;width:36px;height:30px"></div>
<svg style="left:1241px;top:80px" width="36" height="30"><path d="M13 11.5H24.5M11.5 17.5H23" stroke="#111" stroke-width="3"/><path d="M9.5 11.5L14.5 7.5V15.5Z M26 17.5L21 13.5V21.5Z" fill="#111"/></svg>

<div class="t" style="left:593px;top:121px;font-size:17px;line-height:17px">手抖修正</div>
<div class="box" style="left:666px;top:116px;width:65px;height:29px"></div>
<div class="t" style="left:673px;top:121px;font-size:17px;line-height:17px">2</div>
<div class="gb" style="left:705px;top:119px;width:23px;height:23px"></div>
<svg style="left:705px;top:119px" width="23" height="23"><path d="M7.5 10H15.5L11.5 14Z" fill="#fff"/></svg>
<div class="lb" style="left:743px;top:115px;width:35px;height:30px"></div>
<svg style="left:743px;top:115px" width="35" height="30"><path d="M11.5 8L24 20.5" stroke="#111" stroke-width="1.4"/></svg>

<!-- ===== CANVAS ===== -->
<div class="a" style="left:592px;top:150px;width:773px;height:617px;background:#fff;border:1px solid #b3b2b6;border-radius:3px"></div>
<div class="a" style="left:595px;top:153px;width:742px;height:587px;background:#b1aeb2"></div>
<div class="a" style="left:710px;top:190px;width:512px;height:512px;background:#fff"></div>
<svg style="left:710px;top:190px" width="512" height="512"><path d="M253.0,57.0 L265.5,52.4 L282.4,52.4 L284.6,56.9 L295.8,69.2 L313.8,90.6 L327.3,110.8 L332.2,123.1 L332.2,170.3 L329.6,183.8 L327.3,197.3 L318.6,210.0 L309.0,222.4 L293.8,233.4 L280.0,239.6 L259.4,250.6 L233.3,260.9 L220.9,267.1 L200.3,281.5 L189.3,291.9 L183.8,299.4 L178.3,310.4 L319.3,310.4 L326.9,308.4 L335.1,307.7 L343.4,302.2 L347.5,296.7 L347.5,287.0 L345.4,274.7 L340.6,265.0 L331.0,249.9 L324.1,243.0 L314.5,227.2 L307.6,221.0 L295.2,210.0 L291.3,206.3 L266.6,189.4 L248.7,176.0 L228.4,159.1 L215.0,145.6 L203.7,133.3 L199.2,123.1 L200.3,96.2 L206.0,89.4 L217.2,80.4 L237.4,68.1 L253.0,57.0" fill="none" stroke="#9e9ea0" stroke-width="1.1"/></svg>
<div class="a" style="left:1339px;top:153px;width:23px;height:587px;background:#e7e6e9"></div>
<div class="gb" style="left:1339px;top:153px;width:23px;height:23px"></div>
<svg style="left:1339px;top:153px" width="23" height="23"><path d="M7.5 13H15.5L11.5 9Z" fill="#fff"/></svg>
<div class="gb" style="left:1339px;top:303px;width:23px;height:286px"></div>
<div class="gb" style="left:1339px;top:717px;width:23px;height:23px"></div>
<svg style="left:1339px;top:717px" width="23" height="23"><path d="M7.5 10H15.5L11.5 14Z" fill="#fff"/></svg>
<div class="a" style="left:595px;top:742px;width:742px;height:23px;background:#e7e6e9"></div>
<div class="gb" style="left:595px;top:742px;width:23px;height:23px"></div>
<svg style="left:595px;top:742px" width="23" height="23"><path d="M13 7.5V15.5L9 11.5Z" fill="#fff"/></svg>
<div class="gb" style="left:762px;top:742px;width:409px;height:23px"></div>
<div class="gb" style="left:1314px;top:742px;width:23px;height:23px"></div>
<svg style="left:1314px;top:742px" width="23" height="23"><path d="M10 7.5V15.5L14 11.5Z" fill="#fff"/></svg>

<!-- doc tab -->
<div class="a" style="left:592px;top:771px;width:272px;height:31px;background:#dcdaf9;border:1px solid #a09ec6;border-radius:2px"></div>
<div class="a" style="left:603px;top:778px;width:14px;height:16px;background:linear-gradient(135deg,#3a8a9a,#b8d890 55%,#2a4a2a);border:1px solid #222;clip-path:polygon(0 0,70% 0,100% 25%,100% 100%,0 100%)"></div>
<div class="t" style="left:628px;top:777px;font-size:17px;line-height:17px">新建画布1</div>
<div class="t" style="left:800px;top:778px;width:57px;text-align:right;font-size:15px;line-height:16px">100%</div>
<div class="a" style="left:1339px;top:742px;width:23px;height:23px;background:#efeef1"></div>
<div class="a" style="left:1342px;top:771px;width:23px;height:12px;background:#dcdbde;border:1px solid #d0cfd3;border-radius:3px"></div>
<svg style="left:1342px;top:771px" width="23" height="12"><path d="M7.5 8H15.5L11.5 4Z" fill="#f4f4f4"/></svg>

<!-- status -->
<div class="t" style="left:792px;top:812px;font-size:17px;line-height:17px">内存使用量</div>
<div class="box" style="left:882px;top:807px;width:186px;height:29px;background:#f8f6f9;border-color:#aaa9ad"></div>
<div class="a" style="left:885px;top:810px;width:9px;height:23px;background:#4fc99a"></div>
<div class="t" style="left:888px;top:813px;font-size:17px;line-height:17px">5% (5%)</div>
<div class="t" style="left:1081px;top:812px;font-size:17px;line-height:17px">磁盘容量</div>
<div class="box" style="left:1154px;top:807px;width:185px;height:29px;background:#f8f6f9;border-color:#aaa9ad"></div>
<div class="a" style="left:1157px;top:810px;width:114px;height:23px;background:#42bdf3"></div>
<div class="t" style="left:1160px;top:813px;font-size:17px;line-height:17px;color:#163a66">63%</div>
<div class="t" style="left:1245px;top:785px;font-size:21px;line-height:21px;color:rgba(110,110,110,.45);letter-spacing:.3px">激活 Windows</div>
<div class="t" style="left:1252px;top:812px;font-size:15px;line-height:16px;color:rgba(110,110,110,.45)">转到"设置"以激活 Windows</div>

</body></html>
